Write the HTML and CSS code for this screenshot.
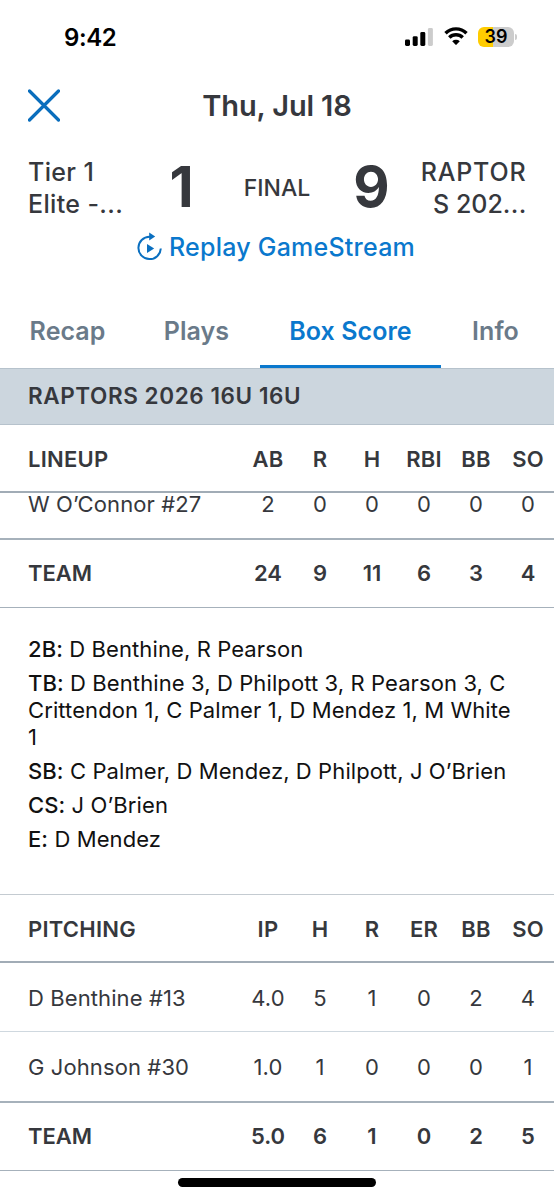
FILE: index.html
```html
<!DOCTYPE html>
<html lang="en">
<head>
<meta charset="utf-8">
<meta name="viewport" content="width=device-width, initial-scale=1">
<title>Box Score</title>
<link rel="stylesheet" href="styles.css">
</head>
<body>
<div class="app">
  <div class="status">
    <span class="clock">9:42</span>
    <div class="indicators">
      <svg class="signal" viewBox="0 0 28 18" aria-hidden="true">
        <rect x="0" y="11.5" width="5" height="6.5" rx="1.4"/>
        <rect x="7.7" y="8.2" width="5" height="9.8" rx="1.4"/>
        <rect x="15.3" y="4" width="5" height="14" rx="1.4"/>
        <rect class="dim" x="22.9" y="0" width="5" height="18" rx="1.4"/>
      </svg>
      <svg class="wifi" viewBox="0 0 24 18" aria-hidden="true">
        <path class="arc" d="M1.5 6.2 A15 15 0 0 1 22.5 6.2"/>
        <path class="arc" d="M5.3 10.5 A9.4 9.4 0 0 1 18.7 10.5"/>
        <path d="M8.2 14.2 A5.6 5.6 0 0 1 15.8 14.2 L12.6 17.6 Q12 18.2 11.4 17.6 Z"/>
      </svg>
      <div class="battery"><span class="level">39</span><i class="nub"></i></div>
    </div>
  </div>

  <header class="top">
    <svg class="close" viewBox="0 0 32 32" aria-label="Close"><path d="M1.5 1.5 30.5 30.5M30.5 1.5 1.5 30.5"/></svg>
    <h1 class="date">Thu, Jul 18</h1>
  </header>

  <section class="score">
    <div class="team">Tier 1<br>Elite -<span class="dots">...</span></div>
    <div class="points">1</div>
    <div class="state">FINAL</div>
    <div class="points away">9</div>
    <div class="team right"><span class="wide">RAPTOR</span><br>S 202<span class="dots">...</span></div>
  </section>

  <a class="replay">
    <svg class="replay-icon" viewBox="0 0 26 30" aria-hidden="true">
      <path class="ring" d="M14 4.7 H12.5 A11.2 11.2 0 1 0 23.8 16.5"/>
      <path d="M12.2 .4 18.2 4.6 12.2 8.4Z"/>
      <path d="M10 12 17.2 16.5 10 21Z"/>
    </svg>
    <span class="replay-label">Replay GameStream</span>
  </a>

  <nav class="tabs">
    <a class="tab">Recap</a>
    <a class="tab plays">Plays</a>
    <a class="tab active">Box Score</a>
    <a class="tab info">Info</a>
  </nav>

  <h2 class="band">RAPTORS 2026 16U 16U</h2>

  <div class="row head"><span>LINEUP</span><b>AB</b><b>R</b><b>H</b><b>RBI</b><b>BB</b><b>SO</b></div>
  <div class="row clipped"><span>W O’Connor #27</span><b>2</b><b>0</b><b>0</b><b>0</b><b>0</b><b>0</b></div>
  <div class="row total"><span>TEAM</span><b>24</b><b>9</b><b>11</b><b>6</b><b>3</b><b>4</b></div>

  <div class="notes">
    <p><strong>2B:</strong> D Benthine, R Pearson</p>
    <p><strong>TB:</strong> D Benthine 3, D Philpott 3, R Pearson 3, C<br>Crittendon 1, C Palmer 1, D Mendez 1, M White<br>1</p>
    <p><strong>SB:</strong> C Palmer, D Mendez, D Philpott, J O’Brien</p>
    <p><strong>CS:</strong> J O’Brien</p>
    <p><strong>E:</strong> D Mendez</p>
  </div>

  <div class="row head pitching"><span>PITCHING</span><b>IP</b><b>H</b><b>R</b><b>ER</b><b>BB</b><b>SO</b></div>
  <div class="row player"><span>D Benthine #13</span><b>4.0</b><b>5</b><b>1</b><b>0</b><b>2</b><b>4</b></div>
  <div class="row player last"><span>G Johnson #30</span><b>1.0</b><b>1</b><b>0</b><b>0</b><b>0</b><b>1</b></div>
  <div class="row total"><span>TEAM</span><b>5.0</b><b>6</b><b>1</b><b>0</b><b>2</b><b>5</b></div>

  <div class="home-bar"></div>
</div>
</body>
</html>
```
FILE: styles.css
```css
* { box-sizing: border-box; }
body {
  margin: 0;
  background: #fff;
  font-family: Inter, "Liberation Sans", sans-serif;
  color: #36383d;
}
h1, h2, p { margin: 0; }

.app { width: 554px; height: 1200px; overflow: hidden; display: flex; flex-direction: column; }

.status { height: 74px; padding: 0 40px 0 64px; display: flex; align-items: center; justify-content: space-between; color: #000; }
.clock { font-size: 24px; font-weight: 600; letter-spacing: -0.4px; }
.indicators { display: flex; align-items: center; margin-top: -2px; }
.signal { width: 28px; height: 18px; margin-right: 11px; margin-top: 2px; }
.signal .dim { fill: #ccc; }
.wifi { width: 24px; height: 18px; margin-right: 10px; }
.wifi .arc { fill: none; stroke: #000; stroke-width: 3.4; }
.battery {
  position: relative; width: 36px; height: 20px; margin-top: 1px; border-radius: 6px;
  background: linear-gradient(90deg, #fc0 15px, #ccc 15px);
  display: flex; align-items: center; justify-content: center;
}
.level { font-size: 18px; font-weight: 600; line-height: 20px; }
.nub { position: absolute; right: -3px; top: 7px; width: 2px; height: 6px; border-radius: 0 2px 2px 0; background: #ccc; }

.top { height: 64px; padding: 0 28px; display: grid; grid-template-columns: 32px 1fr 32px; align-items: center; }
.close { width: 32px; height: 33px; margin-top: -2px; fill: none; stroke: #0a6ebd; stroke-width: 3.2; stroke-linecap: round; }
.date { font-size: 29px; font-weight: 600; line-height: 36px; text-align: center; letter-spacing: -0.15px; }

.score { height: 90px; padding: 18px 28px 0; display: grid; grid-template-columns: 109px 89px 102px 87px 111px; }
.team { font-size: 25px; font-weight: 500; line-height: 32px; letter-spacing: .35px; white-space: nowrap; }
.team.right { text-align: right; letter-spacing: 0; }
.team.right .wide { letter-spacing: .8px; margin-right: -.4px; }
.dots { letter-spacing: .4px; }
.team.right .dots { margin-right: -.8px; }
.points { font-size: 56px; font-weight: 700; line-height: 62px; text-align: center; }
.state { font-size: 23px; font-weight: 500; line-height: 64px; text-align: center; }

.replay { height: 46px; padding-left: 137px; display: flex; align-items: flex-start; color: #0a78cd; }
.replay-icon { width: 26px; height: 30px; margin-top: 4px; margin-right: 6px; fill: #0a6fc0; flex: none; }
.ring { fill: none; stroke: #0a6fc0; stroke-width: 2; }
.replay-label { font-size: 25px; font-weight: 500; line-height: 38px; letter-spacing: .23px; white-space: nowrap; }

.tabs { height: 94px; padding-top: 20px; display: grid; grid-template-columns: 135px 125px 181px 1fr; }
.tab { font-size: 25px; font-weight: 600; line-height: 74px; text-align: center; color: #6a7a89; white-space: nowrap; border-bottom: 3px solid transparent; height: 74px; letter-spacing: .05px; }
.tab.plays { padding-right: 2px; }
.tab.info { padding-right: 4px; }
.tab.active { color: #0a78cd; border-color: #0a78cd; }

.band { height: 57px; padding-left: 28px; background: #ccd6de; border-top: 1px solid #b6c2cc; border-bottom: 1px solid #b6c2cc; font-size: 22.5px; font-weight: 600; line-height: 54px; letter-spacing: .58px; }

.row { flex: none; height: 69px; padding-left: 28px; display: grid; grid-template-columns: 214px repeat(6, 52px); align-items: center; font-size: 22px; letter-spacing: .1px; line-height: 28px; white-space: nowrap; }
.row b { font-weight: inherit; text-align: center; }
.head { height: 68px; padding-top: 2px; font-weight: 600; letter-spacing: .25px; border-bottom: 2px solid #a1acb6; }
.clipped { height: 47px; align-items: start; line-height: 22px; border-bottom: 2px solid #a6b1bb; }
.total { height: 68px; padding-bottom: 1px; font-weight: 600; letter-spacing: 0; border-bottom: 1px solid #a6b1bb; }
.player { height: 69px; padding-top: 1px; border-bottom: 1px solid #cfd8df; }
.last { height: 71px; border-bottom: 2px solid #a6b1bb; }

.notes { flex: none; height: 286px; padding: 28px 28px 0; color: #111; font-size: 22px; letter-spacing: .1px; line-height: 27px; white-space: nowrap; }
.notes p { margin-bottom: 7px; }
.notes strong { font-weight: 500; }
.pitching { height: 69px; padding-top: 1px; border-top: 1px solid #c4cbd1; }

.home-bar { width: 198px; height: 9px; margin: 7px auto 0; border-radius: 5px; background: #000; flex: none; }
```
